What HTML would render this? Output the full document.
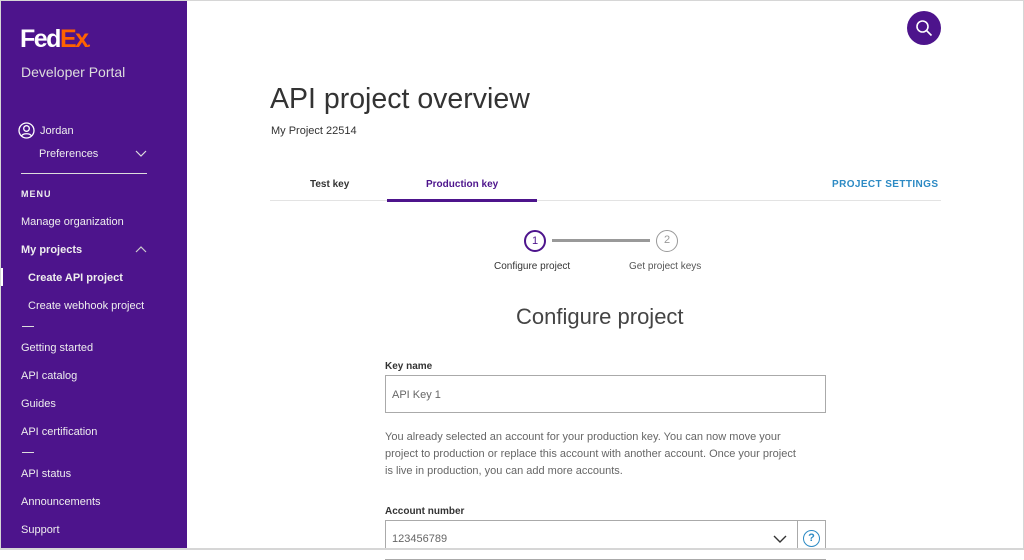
<!DOCTYPE html>
<html><head><style>
*{margin:0;padding:0;box-sizing:border-box}
body{width:1024px;height:550px;overflow:hidden;background:#fff;font-family:"Liberation Sans",sans-serif;position:relative}
.frame{position:absolute;left:0;top:0;width:1024px;height:550px;border:1px solid #d6d6d6;border-bottom:2px solid #d6d6d6;pointer-events:none;z-index:5}
.side{position:absolute;left:1px;top:1px;width:186px;height:547px;background:#4d148c;color:#fff}
.a{position:absolute;font-size:11px;color:#eee;white-space:nowrap}
.b{font-weight:bold}
.dash{position:absolute;left:21px;width:12px;height:1px;background:#ddd}
.t{position:absolute;white-space:nowrap}
</style></head><body>
<div class="side">
 <div class="t" style="left:19px;top:24px;font-size:25px;font-weight:bold;letter-spacing:-1.5px;color:#fff">Fed<span style="color:#ff6200">Ex</span><span style="color:#ff6200;font-size:5px">●</span></div>
 <div class="t" style="left:20px;top:63px;font-size:14px;color:#ddd">Developer Portal</div>
 <svg style="position:absolute;left:17px;top:121px" width="17" height="17" viewBox="0 0 17 17" fill="none" stroke="#fff" stroke-width="1.3"><circle cx="8.5" cy="8.5" r="7.5"/><circle cx="8.5" cy="6.5" r="2.8"/><path d="M3.5 14c1.5-3 8.5-3 10 0"/></svg>
 <div class="a" style="left:39px;top:124px">Jordan</div>
 <div class="a" style="left:38px;top:147px">Preferences</div>
 <svg style="position:absolute;left:134px;top:149px" width="12" height="8" viewBox="0 0 12 8" fill="none" stroke="#ddd" stroke-width="1.2"><path d="M1 1l5 5 5-5"/></svg>
 <div style="position:absolute;left:20px;top:172px;width:126px;height:1px;background:#ddd"></div>
 <div class="a b" style="left:20px;top:188px;font-size:9px;letter-spacing:1px">MENU</div>
 <div class="a" style="left:20px;top:215px">Manage organization</div>
 <div class="a b" style="left:20px;top:243px">My projects</div>
 <svg style="position:absolute;left:134px;top:245px" width="12" height="7" viewBox="0 0 12 7" fill="none" stroke="#ccc" stroke-width="1.2"><path d="M1 6l5-5 5 5"/></svg>
 <div style="position:absolute;left:0;top:267px;width:2px;height:18px;background:#fff"></div>
 <div class="a b" style="left:27px;top:271px">Create API project</div>
 <div class="a" style="left:27px;top:299px">Create webhook project</div>
 <div class="dash" style="top:325px"></div>
 <div class="a" style="left:20px;top:341px">Getting started</div>
 <div class="a" style="left:20px;top:369px">API catalog</div>
 <div class="a" style="left:20px;top:397px">Guides</div>
 <div class="a" style="left:20px;top:425px">API certification</div>
 <div class="dash" style="top:451px"></div>
 <div class="a" style="left:20px;top:467px">API status</div>
 <div class="a" style="left:20px;top:495px">Announcements</div>
 <div class="a" style="left:20px;top:523px">Support</div>
</div>
<div style="position:absolute;left:907px;top:11px;width:34px;height:34px;border-radius:50%;background:#4d148c"></div>
<svg style="position:absolute;left:915px;top:19px" width="18" height="18" viewBox="0 0 18 18" fill="none" stroke="#fff" stroke-width="1.6"><circle cx="7.5" cy="7.5" r="5.5"/><path d="M11.5 11.5l5 5"/></svg>
<div class="t" style="left:270px;top:83px;font-size:28.5px;color:#333">API project overview</div>
<div class="t" style="left:271px;top:125px;font-size:11px;color:#333">My Project 22514</div>
<div class="t" style="left:310px;top:179px;font-size:10px;color:#333;font-weight:bold">Test key</div>
<div class="t" style="left:426px;top:179px;font-size:10px;color:#4d148c;font-weight:bold">Production key</div>
<div class="t" style="left:832px;top:179px;font-size:10px;color:#2c8ac4;font-weight:bold;letter-spacing:.4px">PROJECT SETTINGS</div>
<div style="position:absolute;left:270px;top:200px;width:671px;height:1px;background:#e3e3e3"></div>
<div style="position:absolute;left:387px;top:199px;width:150px;height:3px;background:#4d148c"></div>
<div style="position:absolute;left:524px;top:230px;width:22px;height:22px;border:2px solid #4d148c;border-radius:50%;font-size:11px;text-align:center;line-height:18px;color:#4d148c">1</div>
<div style="position:absolute;left:552px;top:239px;width:98px;height:3px;background:#999"></div>
<div style="position:absolute;left:656px;top:230px;width:22px;height:22px;border:1.5px solid #999;border-radius:50%;font-size:11px;text-align:center;line-height:19px;color:#999">2</div>
<div class="t" style="left:494px;top:261px;font-size:10px;color:#333">Configure project</div>
<div class="t" style="left:629px;top:261px;font-size:10px;color:#555">Get project keys</div>
<div class="t" style="left:516px;top:304px;font-size:22px;color:#444">Configure project</div>
<div class="t" style="left:385px;top:361px;font-size:10px;color:#333;font-weight:bold">Key name</div>
<div style="position:absolute;left:385px;top:375px;width:441px;height:38px;border:1px solid #aaa"></div>
<div class="t" style="left:392px;top:389px;font-size:11px;color:#666">API Key 1</div>
<div style="position:absolute;left:385px;top:429px;width:420px;font-size:11px;line-height:17px;color:#666">You already selected an account for your production key. You can now move your project to production or replace this account with another account. Once your project is live in production, you can add more accounts.</div>
<div class="t" style="left:385px;top:506px;font-size:10px;color:#333;font-weight:bold">Account number</div>
<div style="position:absolute;left:385px;top:520px;width:441px;height:40px;border:1px solid #aaa"></div>
<div style="position:absolute;left:797px;top:520px;width:1px;height:30px;background:#aaa"></div>
<div class="t" style="left:392px;top:533px;font-size:11px;color:#666">123456789</div>
<svg style="position:absolute;left:773px;top:535px" width="14" height="8" viewBox="0 0 14 8" fill="none" stroke="#333" stroke-width="1.4"><path d="M1 1l6 6 6-6"/></svg>
<div style="position:absolute;left:803px;top:530px;width:17px;height:17px;border:1.5px solid #2c8ac4;border-radius:50%;color:#2c8ac4;font-size:11px;font-weight:bold;text-align:center;line-height:14px">?</div>
<div style="position:absolute;left:0;top:549px;width:1024px;height:10px;background:#fff;z-index:4"></div>
<div class="frame"></div>
</body></html>
